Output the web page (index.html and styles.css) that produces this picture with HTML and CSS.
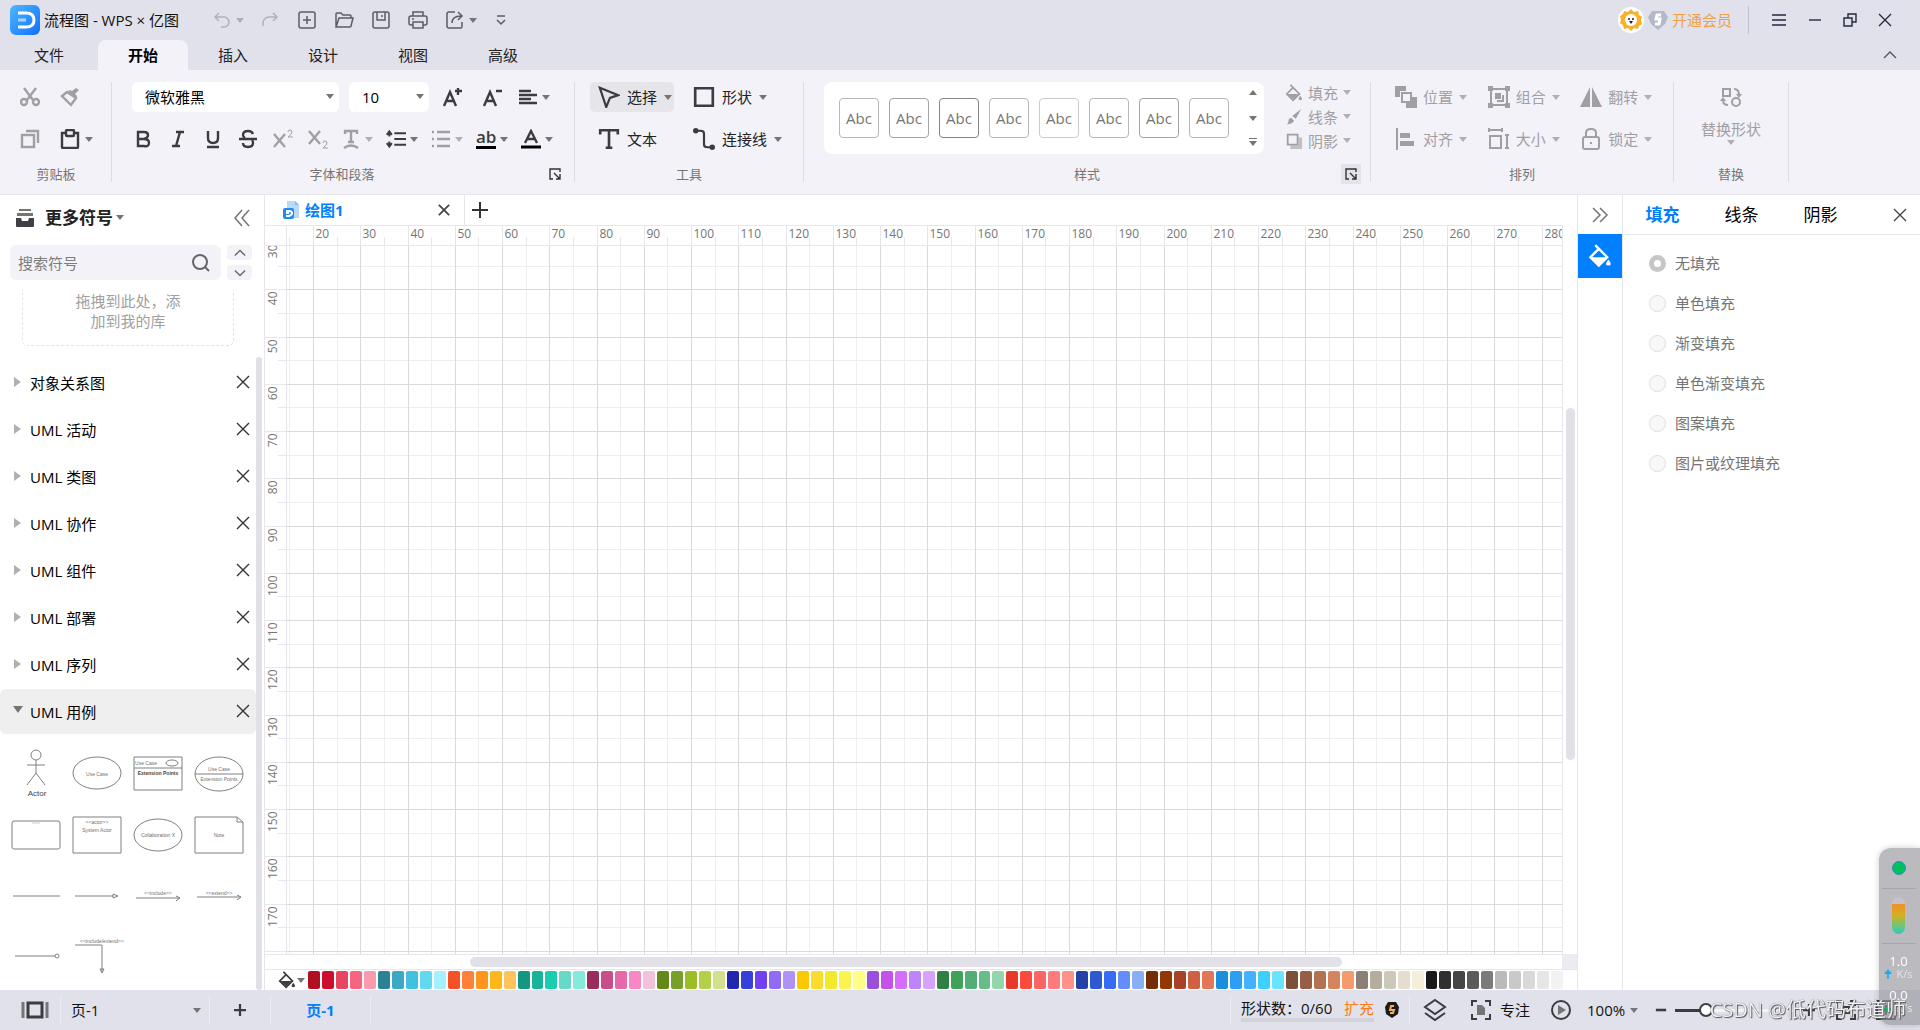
FILE: index.html
```html
<!DOCTYPE html>
<html lang="zh-CN">
<head>
<meta charset="utf-8">
<title>流程图 - WPS × 亿图</title>
<link rel="stylesheet" href="styles.css">
</head>
<body>
<svg class="sprite" aria-hidden="true">
  <symbol id="undo" viewBox="0 0 20 20"><path d="M7 3 3 7l4 4M3 7h9a5 5 0 0 1 0 10H9"/></symbol>
  <symbol id="redo" viewBox="0 0 20 20"><path d="m13 3 4 4-4 4M17 7H9a6 6 0 0 0-6 6v3"/></symbol>
  <symbol id="new" viewBox="0 0 20 20"><rect x="2" y="2" width="16" height="16" rx="2"/><path d="M10 6v8M6 10h8"/></symbol>
  <symbol id="open" viewBox="0 0 20 20"><path d="M2 16V4q0-1 1-1h4l2 2h7q1 0 1 1v2M2 17 5 8h14l-2 8q0 1-1 1z"/></symbol>
  <symbol id="save" viewBox="0 0 20 20"><rect x="2" y="2" width="16" height="16" rx="2"/><path d="M6 2v8h8V2M11 5v2"/></symbol>
  <symbol id="print" viewBox="0 0 20 20"><path d="M5 6V2h10v4M5 15H3q-2 0-2-2V8q0-2 2-2h14q2 0 2 2v5q0 2-2 2h-2M5 12h10v6H5zM4 9h2"/></symbol>
  <symbol id="export" viewBox="0 0 20 20"><path d="M10 2H4Q2 2 2 4v12q0 2 2 2h12q1 0 1-2v-4M7 13q0-7 9-7M13 2l4 4-4 4"/></symbol>
  <symbol id="more" viewBox="0 0 20 20"><path d="M6 6h8M6 10l4 4 4-4"/></symbol>
  <symbol id="cut" viewBox="0 0 20 20"><path d="m4 1 9 12M16 1 7 13"/><circle cx="4" cy="15" r="3"/><circle cx="16" cy="15" r="3"/></symbol>
  <symbol id="brush" viewBox="0 0 20 20"><path d="M7 5 2 9l9 9 5-7z"/><path d="m8 4 8 8 1-3-2-2 4-4-3-2-4 3-2-1z" class="solid"/></symbol>
  <symbol id="copy" viewBox="0 0 20 20"><rect x="2" y="6" width="12" height="12"/><path d="M6 2h12v12"/></symbol>
  <symbol id="paste" viewBox="0 0 20 20"><path d="M6 4H2v14q0 1 1 1h14q1 0 1-1V4h-4"/><rect x="6" y="1" width="8" height="6" rx="1"/></symbol>
  <symbol id="grow" viewBox="0 0 20 20"><path d="M2 19 8 5l6 14M4 14h8M13 4h7M16 1v7"/></symbol>
  <symbol id="shrink" viewBox="0 0 20 20"><path d="M2 19 8 5l6 14M4 14h8M14 4h6"/></symbol>
  <symbol id="align" viewBox="0 0 20 20"><path d="M1 4h12M1 8h18M1 12h12M1 16h18"/></symbol>
  <symbol id="bold" viewBox="0 0 20 20"><path d="M5 3h6q4 0 4 3t-4 4H5zM5 10h6q5 0 5 4t-5 3H5z"/></symbol>
  <symbol id="italic" viewBox="0 0 20 20"><path d="M8 3h8M4 17h8M12 3 8 17"/></symbol>
  <symbol id="underline" viewBox="0 0 20 20"><path d="M5 2v7q0 5 5 5t5-5V2M4 18h12"/></symbol>
  <symbol id="strike" viewBox="0 0 20 20"><path d="M15 5q-1-3-5-3-5 0-5 4 0 2 2 3M1 10h18M5 14q0 4 5 4t5-4q0-2-1-3"/></symbol>
  <symbol id="sup" viewBox="0 0 20 20"><path d="m1 5 11 13M12 5 1 18"/><path class="thin" d="M15 3q0-2 2-2t2 2q0 2-4 5h5"/></symbol>
  <symbol id="sub" viewBox="0 0 20 20"><path d="m1 2 11 13M12 2 1 15"/><path class="thin" d="M15 14q0-2 2-2t2 2q0 2-4 5h5"/></symbol>
  <symbol id="texteffect" viewBox="0 0 20 20"><path d="M4 5V2h12v3M10 2v11M7 13h6M3 19q7-5 14 0"/></symbol>
  <symbol id="spacing" viewBox="0 0 24 20"><path d="M10 3h14M10 10h14M10 17h14M4 2v5M4 13v5M1 5l3-4 3 4M1 15l3 4 3-4"/></symbol>
  <symbol id="bullets" viewBox="0 0 20 20"><path d="M6 3h13M6 10h13M6 17h13M1 3h2M1 10h2M1 17h2"/></symbol>
  <symbol id="fontcolor" viewBox="0 0 20 20"><path d="m4 14 6-12 6 12M6 10h8"/><path class="ink" d="M0 18h20"/></symbol>
  <symbol id="launcher" viewBox="0 0 12 12"><path d="M4 11H1V1h10v3M5 5l6 6M11 6v5H7"/></symbol>
  <symbol id="select" viewBox="0 0 24 24"><path d="m2 2 20 8-9 3-4 10z"/></symbol>
  <symbol id="shape" viewBox="0 0 20 20"><path d="M2 2h16v16H2z"/></symbol>
  <symbol id="text" viewBox="0 0 20 20"><path d="M2 6V2h16v4M10 2v16M7 18h6"/></symbol>
  <symbol id="connector" viewBox="0 0 24 24"><path d="M3 3h5q4 0 4 3v12q0 3 4 3h5"/><circle class="solid" cx="3" cy="3" r="3"/><circle class="solid" cx="21" cy="21" r="3"/></symbol>
  <symbol id="bucket" viewBox="0 0 20 20"><path d="m6 1 10 10-7 7-7-7 7-7"/><path class="solid" d="M3 11h12l-6 6z"/><path class="solid" d="M17 13q4 5 0 5t0-5z"/></symbol>
  <symbol id="pen" viewBox="0 0 20 20"><path class="solid" d="m18 1-6 11-4-3zM7 11l3 3q-1 4-8 4 2-1 2-4 0-3 3-3z"/></symbol>
  <symbol id="shadow" viewBox="0 0 20 20"><path d="M3 3h11v11H3z"/><path d="M6 17h11V6" class="fat"/></symbol>
  <symbol id="position" viewBox="0 0 22 22"><path d="M7 7h9v9H7z"/><path class="solid" d="M0 0h11v5H5v6H0zM11 17h6v-6h5v11H11z"/></symbol>
  <symbol id="group" viewBox="0 0 22 22"><path d="M3 3h16v16H3z"/><path class="solid" d="M0 0h5v5H0zM17 0h5v5h-5zM0 17h5v5H0zM17 17h5v5h-5zM7 7h6v6H7z"/><path d="M15 9v6H9"/></symbol>
  <symbol id="flip" viewBox="0 0 22 22"><path class="solid" d="M10 1v20H0zM12 1v20h10z"/></symbol>
  <symbol id="alignobj" viewBox="0 0 22 22"><path d="M2 0v22"/><path class="solid" d="M5 5h10v5H5zM5 13h14v5H5z"/></symbol>
  <symbol id="size" viewBox="0 0 22 22"><path d="M2 8h11v12H2zM1 2h13M1 0v4M14 0v4M19 8v12M17 7h4M17 20h4"/></symbol>
  <symbol id="lock" viewBox="0 0 22 22"><rect x="3" y="9" width="16" height="12" rx="2"/><path d="M6 9V5q0-4 5-4t5 4v4M11 14v2"/></symbol>
  <symbol id="replace" viewBox="0 0 22 22"><path d="M3 3h7v7H3z"/><circle cx="16" cy="16" r="4"/><path d="M14 3q5 0 5 6M8 19q-5 0-5-5"/><path class="solid" d="m16 8 3 4 3-4zM0 15l3-4 3 4z"/></symbol>
  <symbol id="close" viewBox="0 0 14 14"><path d="m1 1 12 12M13 1 1 13"/></symbol>
  <symbol id="menu" viewBox="0 0 16 16"><path d="M1 3h14M1 8h14M1 13h14"/></symbol>
  <symbol id="min" viewBox="0 0 14 14"><path d="M1 7h12"/></symbol>
  <symbol id="restore" viewBox="0 0 14 14"><path d="M1 5h8v8H1zM5 5V1h8v8H9"/></symbol>
  <symbol id="up" viewBox="0 0 14 14"><path d="m1 10 6-6 6 6"/></symbol>
  <symbol id="down" viewBox="0 0 14 14"><path d="m1 4 6 6 6-6"/></symbol>
  <symbol id="chevrons" viewBox="0 0 18 18"><path d="M9 1 2 9l7 8M16 1 9 9l7 8"/></symbol>
  <symbol id="chevrons-right" viewBox="0 0 18 18"><path d="m2 2 7 7-7 7M9 2l7 7-7 7"/></symbol>
  <symbol id="tray" viewBox="0 0 18 18"><path class="soft" d="M3 0h12v2H3zM1 4h16v3H1z"/><path class="solid" d="M0 9h5l1 3h6l1-3h5v8q0 1-1 1H1q-1 0-1-1z"/></symbol>
  <symbol id="search" viewBox="0 0 20 20"><circle cx="9" cy="9" r="7"/><path d="m14 14 4 4"/></symbol>
  <symbol id="plus" viewBox="0 0 16 16"><path d="M8 0v16M0 8h16"/></symbol>
  <symbol id="pages" viewBox="0 0 28 20"><path d="M7 3h14v14H7z"/><path class="grey" d="M2 2v16M26 2v16"/></symbol>
  <symbol id="layers" viewBox="0 0 24 24"><path d="m12 2 10 7-10 7L2 9zM2 15l10 7 10-7"/></symbol>
  <symbol id="focus" viewBox="0 0 22 22"><path d="M2 7V2h5M15 2h5v5M20 15v5h-5M7 20H2v-5"/><path class="soft" d="M7 6h5l3 3v7H7z"/></symbol>
  <symbol id="play" viewBox="0 0 22 22"><circle cx="11" cy="11" r="9"/><path class="soft" d="m8 6 8 5-8 5z"/></symbol>
  <symbol id="fit" viewBox="0 0 22 22"><path d="M2 7V2h5M15 2h5v5M20 15v5h-5M7 20H2v-5M8 8h6v6H8z"/></symbol>
  <symbol id="full" viewBox="0 0 22 22"><path d="M2 2h18v18H2zM11 6v10M7 11h8"/></symbol>
  <symbol id="arrowup" viewBox="0 0 10 12"><path class="solid" d="M5 0 0 6h4v6h2V6h4z"/></symbol>
</svg>

<div class="app">
  <header class="titlebar">
    <svg class="logo" viewBox="0 0 30 30"><defs><linearGradient id="lg" x1="0" y1="0" x2="1" y2="1"><stop offset="0" stop-color="#4db8ff"/><stop offset="1" stop-color="#1070ff"/></linearGradient></defs><rect width="30" height="30" rx="6" fill="url(#lg)"/><path d="M8 8h8q8 0 8 7t-8 7H8" fill="none" stroke="#fff" stroke-width="3"/><path d="M8 15h8" stroke="#a9d8ff" stroke-width="3"/></svg>
    <h1 class="title">流程图 - WPS × 亿图</h1>
    <div class="quick">
      <button class="q off" aria-label="撤销"><svg class="i"><use href="#undo"/></svg><span class="caret"></span></button>
      <button class="q off" aria-label="重做"><svg class="i"><use href="#redo"/></svg></button>
      <button class="q" aria-label="新建"><svg class="i"><use href="#new"/></svg></button>
      <button class="q" aria-label="打开"><svg class="i"><use href="#open"/></svg></button>
      <button class="q" aria-label="保存"><svg class="i"><use href="#save"/></svg></button>
      <button class="q" aria-label="打印"><svg class="i"><use href="#print"/></svg></button>
      <button class="q" aria-label="导出"><svg class="i"><use href="#export"/></svg><span class="caret"></span></button>
      <button class="q" aria-label="自定义"><svg class="i"><use href="#more"/></svg></button>
    </div>
    <div class="account">
      <svg class="avatar" viewBox="0 0 26 26"><circle cx="13" cy="13" r="13" fill="#fff"/><path d="m13 2 3 3 4-1 1 4 3 2-1 3 1 4-3 2-1 3-4-1-3 3-3-3-4 1-1-4-3-2 1-3-1-4 3-2 1-3 4 1z" fill="#f7b12c"/><circle cx="13" cy="13" r="6" fill="#fff"/><circle cx="11" cy="12" r="1" fill="#222"/><circle cx="15" cy="12" r="1" fill="#222"/><path d="M11 14h4l-2 3z" fill="#222"/></svg>
      <svg class="vip" viewBox="0 0 20 20"><path d="M4 1h12l4 6-3 7-7 6-7-6-3-7z" fill="#b3b8ca"/><path d="M13 5H9L8 9h4l-1 5H7" fill="none" stroke="#fff" stroke-width="3"/></svg>
      <a class="upgrade" href="#">开通会员</a>
    </div>
    <div class="window">
      <button aria-label="菜单"><svg class="i16"><use href="#menu"/></svg></button>
      <button aria-label="最小化"><svg class="i14"><use href="#min"/></svg></button>
      <button aria-label="还原"><svg class="i14"><use href="#restore"/></svg></button>
      <button aria-label="关闭"><svg class="i14"><use href="#close"/></svg></button>
    </div>
  </header>

  <nav class="tabs">
    <button class="tab file">文件</button><button class="tab active">开始</button><button class="tab">插入</button><button class="tab">设计</button><button class="tab">视图</button><button class="tab">高级</button>
    <button class="collapse" aria-label="收起功能区"><svg class="i14"><use href="#up"/></svg></button>
  </nav>

  <section class="ribbon">
    <div class="group clip">
      <div class="rows">
        <div class="row"><button class="tool w40 off" aria-label="剪切"><svg class="i"><use href="#cut"/></svg></button><button class="tool w40 off" aria-label="格式刷"><svg class="i"><use href="#brush"/></svg></button></div>
        <div class="row"><button class="tool w40 off" aria-label="复制"><svg class="i"><use href="#copy"/></svg></button><button class="tool w40" aria-label="粘贴"><svg class="i"><use href="#paste"/></svg><span class="caret"></span></button></div>
      </div>
      <div class="name">剪贴板</div>
    </div>
    <div class="group fonts">
      <div class="rows">
        <div class="row first">
          <label class="combo family"><select aria-label="字体"><option>微软雅黑</option></select></label>
          <label class="combo fsize"><select aria-label="字号"><option>10</option></select></label>
          <button class="tool w40" aria-label="增大字号"><svg class="i"><use href="#grow"/></svg></button><button class="tool w40" aria-label="减小字号"><svg class="i"><use href="#shrink"/></svg></button><button class="tool w45" aria-label="对齐"><svg class="i"><use href="#align"/></svg><span class="caret"></span></button>
        </div>
        <div class="row">
          <button class="tool w35" aria-label="加粗"><svg class="i"><use href="#bold"/></svg></button><button class="tool w35" aria-label="斜体"><svg class="i"><use href="#italic"/></svg></button><button class="tool w35" aria-label="下划线"><svg class="i"><use href="#underline"/></svg></button><button class="tool w35" aria-label="删除线"><svg class="i"><use href="#strike"/></svg></button><button class="tool w35 off" aria-label="上标"><svg class="i"><use href="#sup"/></svg></button><button class="tool w35 off" aria-label="下标"><svg class="i"><use href="#sub"/></svg></button><button class="tool w45 off" aria-label="文字效果"><svg class="i"><use href="#texteffect"/></svg><span class="caret"></span></button><button class="tool w45" aria-label="行距"><svg class="i"><use href="#spacing"/></svg><span class="caret"></span></button><button class="tool w45 off" aria-label="项目符号"><svg class="i"><use href="#bullets"/></svg><span class="caret"></span></button><button class="tool w45" aria-label="突出显示"><span class="ab">ab</span><span class="caret"></span></button><button class="tool w45" aria-label="字体颜色"><svg class="i"><use href="#fontcolor"/></svg><span class="caret"></span></button>
        </div>
      </div>
      <div class="name"><span>字体和段落</span><button class="launch" aria-label="字体设置"><svg class="i12"><use href="#launcher"/></svg></button></div>
    </div>
    <div class="group tools">
      <div class="rows">
        <div class="row"><button class="labelled sel on"><svg class="i22"><use href="#select"/></svg>选择<span class="caret"></span></button><button class="labelled"><svg class="i22"><use href="#shape"/></svg>形状<span class="caret"></span></button></div>
        <div class="row"><button class="labelled sel"><svg class="i22"><use href="#text"/></svg>文本</button><button class="labelled"><svg class="i22"><use href="#connector"/></svg>连接线<span class="caret"></span></button></div>
      </div>
      <div class="name">工具</div>
    </div>
    <div class="group styles">
      <div class="rows side">
        <div class="gallery">
          <button class="abc">Abc</button><button class="abc b">Abc</button><button class="abc c">Abc</button><button class="abc">Abc</button><button class="abc d">Abc</button><button class="abc">Abc</button><button class="abc b">Abc</button><button class="abc">Abc</button>
          <div class="scroller"><button aria-label="上一行"><span class="caret upc"></span></button><button aria-label="下一行"><span class="caret"></span></button><button aria-label="展开"><span class="caret bar"></span></button></div>
        </div>
        <div class="stack off"><button><svg class="i18"><use href="#bucket"/></svg>填充<span class="caret"></span></button><button><svg class="i18"><use href="#pen"/></svg>线条<span class="caret"></span></button><button><svg class="i18"><use href="#shadow"/></svg>阴影<span class="caret"></span></button></div>
      </div>
      <div class="name"><span>样式</span><button class="launch tint" aria-label="样式设置"><svg class="i12"><use href="#launcher"/></svg></button></div>
    </div>
    <div class="group arrange off">
      <div class="rows">
        <div class="row"><button class="arr"><svg class="i22"><use href="#position"/></svg>位置<span class="caret"></span></button><button class="arr"><svg class="i22"><use href="#group"/></svg>组合<span class="caret"></span></button><button class="arr"><svg class="i22"><use href="#flip"/></svg>翻转<span class="caret"></span></button></div>
        <div class="row"><button class="arr"><svg class="i22"><use href="#alignobj"/></svg>对齐<span class="caret"></span></button><button class="arr"><svg class="i22"><use href="#size"/></svg>大小<span class="caret"></span></button><button class="arr"><svg class="i22"><use href="#lock"/></svg>锁定<span class="caret"></span></button></div>
      </div>
      <div class="name">排列</div>
    </div>
    <div class="group swap off">
      <button class="big"><svg class="i22"><use href="#replace"/></svg><span>替换形状</span><span class="caret"></span></button>
      <div class="name">替换</div>
    </div>
  </section>

  <main class="body">
    <aside class="library">
      <div class="libhead"><svg class="i18 tray"><use href="#tray"/></svg><button class="libtitle">更多符号<span class="caret"></span></button><button class="fold" aria-label="收起"><svg class="i18"><use href="#chevrons"/></svg></button></div>
      <div class="searchrow">
        <label class="search"><input type="text" placeholder="搜索符号" aria-label="搜索符号"><svg class="i"><use href="#search"/></svg></label>
        <div class="steps"><button aria-label="上一个"><svg class="i12"><use href="#up"/></svg></button><button aria-label="下一个"><svg class="i12"><use href="#down"/></svg></button></div>
      </div>
      <div class="libscroll">
        <div class="liblist">
          <div class="drop">拖拽到此处，添<br>加到我的库</div>
          <div class="cat"><span class="tri"></span><span>对象关系图</span><button aria-label="关闭"><svg class="i14"><use href="#close"/></svg></button></div>
          <div class="cat"><span class="tri"></span><span>UML 活动</span><button aria-label="关闭"><svg class="i14"><use href="#close"/></svg></button></div>
          <div class="cat"><span class="tri"></span><span>UML 类图</span><button aria-label="关闭"><svg class="i14"><use href="#close"/></svg></button></div>
          <div class="cat"><span class="tri"></span><span>UML 协作</span><button aria-label="关闭"><svg class="i14"><use href="#close"/></svg></button></div>
          <div class="cat"><span class="tri"></span><span>UML 组件</span><button aria-label="关闭"><svg class="i14"><use href="#close"/></svg></button></div>
          <div class="cat"><span class="tri"></span><span>UML 部署</span><button aria-label="关闭"><svg class="i14"><use href="#close"/></svg></button></div>
          <div class="cat"><span class="tri"></span><span>UML 序列</span><button aria-label="关闭"><svg class="i14"><use href="#close"/></svg></button></div>
          <div class="cat open"><span class="tri"></span><span>UML 用例</span><button aria-label="关闭"><svg class="i14"><use href="#close"/></svg></button></div>
          <div class="shapes">
            <svg viewBox="0 0 61 61"><circle cx="30" cy="13" r="5"/><path d="M30 18v13M21 23h18M21 43l9-12 9 12"/><text class="actor" x="31" y="54">Actor</text></svg>
            <svg viewBox="0 0 61 61"><ellipse cx="30" cy="31" rx="24" ry="16"/><text x="30" y="34">Use Case</text></svg>
            <svg viewBox="0 0 61 61"><path d="M6 15h48v33H6zM6 26h48"/><ellipse cx="44" cy="21" rx="6" ry="3"/><text x="18" y="23">Use Case</text><text class="strong" x="30" y="33">Extension Points</text></svg>
            <svg viewBox="0 0 61 61"><ellipse cx="30" cy="32" rx="24" ry="17"/><path d="M6 32h48"/><text x="30" y="29">Use Case</text><text x="30" y="39">Extension Points</text></svg>
            <svg viewBox="0 0 61 61"><rect x="6" y="18" width="48" height="28" rx="2"/><path class="pale" d="M26 20h8"/></svg>
            <svg viewBox="0 0 61 61"><path d="M6 14h48v36H6z"/><text x="30" y="21">&lt;&lt;actor&gt;&gt;</text><text x="30" y="29">System Actor</text></svg>
            <svg viewBox="0 0 61 61"><ellipse cx="30" cy="32" rx="24" ry="16"/><text x="30" y="34">Collaboration X</text></svg>
            <svg viewBox="0 0 61 61"><path d="M6 14h42l6 5v31H6zM48 14v5h6"/><text x="30" y="34">Note</text></svg>
            <svg viewBox="0 0 61 61"><path d="M7 32h47"/></svg>
            <svg viewBox="0 0 61 61"><path d="M8 32h38M46 30v4l5-2z"/></svg>
            <svg viewBox="0 0 61 61"><path d="M8 34h44M48 32l4 2-4 3"/><text x="30" y="31">&lt;&lt;include&gt;&gt;</text></svg>
            <svg viewBox="0 0 61 61"><path d="M8 33h44M48 31l4 2-4 3"/><text x="30" y="31">&lt;&lt;extend&gt;&gt;</text></svg>
            <svg viewBox="0 0 61 61"><path d="M9 31h40"/><circle cx="51" cy="31" r="2"/></svg>
            <svg viewBox="0 0 61 61"><path d="M8 20h27v27M33 44l2 4 2-4z"/><text x="35" y="18">&lt;&lt;include/extend&gt;&gt;</text></svg>
          </div>
        </div>
        <div class="vbar"></div>
      </div>
    </aside>

    <section class="workspace">
      <div class="doctabs">
        <div class="doctab"><svg class="docicon" viewBox="0 0 16 18"><path d="M4 0h8l4 4v13H4z" fill="#b9d9fb"/><path d="M12 0v4h4z" fill="#7db9f5"/><rect y="7" width="11" height="11" rx="2" fill="#2289fa"/><path d="M3 10h3q3 0 3 2t-3 3H3M3 12h3" fill="none" stroke="#fff"/></svg><span>绘图1</span><button aria-label="关闭"><svg class="i12"><use href="#close"/></svg></button></div>
        <button class="adddoc" aria-label="新建绘图"><svg class="i16"><use href="#plus"/></svg></button>
      </div>
      <div class="stage">
        <svg class="drawing" id="drawing"></svg>
        <div class="stagebar"><div class="thumb"></div></div>
        <div class="hbar"><div class="thumb"></div></div>
        <div class="corner"></div>
      </div>
      <div class="palette"><button class="pick" aria-label="填充颜色"><svg class="i18"><use href="#bucket"/></svg><span class="caret"></span></button><div class="swatches" id="swatches"></div></div>
    </section>

    <div class="rail"><button class="expand" aria-label="展开"><svg class="i18"><use href="#chevrons-right"/></svg></button><button class="railtile" aria-label="填充"><svg class="i24"><use href="#bucket"/></svg></button></div>

    <aside class="props">
      <div class="proptabs"><button class="on">填充</button><button>线条</button><button>阴影</button><button class="x" aria-label="关闭"><svg class="i14"><use href="#close"/></svg></button></div>
      <form class="options">
        <label><input type="radio" name="fill" checked>无填充</label>
        <label><input type="radio" name="fill">单色填充</label>
        <label><input type="radio" name="fill">渐变填充</label>
        <label><input type="radio" name="fill">单色渐变填充</label>
        <label><input type="radio" name="fill">图案填充</label>
        <label><input type="radio" name="fill">图片或纹理填充</label>
      </form>
    </aside>
  </main>

  <footer class="status">
    <button class="pagesbtn" aria-label="页面"><svg class="i28"><use href="#pages"/></svg></button>
    <label class="pagesel"><select aria-label="当前页"><option>页-1</option></select></label>
    <button class="addpage" aria-label="添加页"><svg class="i12"><use href="#plus"/></svg></button>
    <button class="pagetab">页-1</button>
    <div class="statusright">
      <div class="count"><div class="countline"><span>形状数：0/60</span><a href="#">扩充</a></div><div class="meter"></div></div>
      <svg class="badge" viewBox="0 0 14 18"><path d="M3 1h8l3 5-1 7-6 4-6-4-1-7z" fill="#1d1a18"/><path d="M9 5H6L5 9h4l-1 3H5" fill="none" stroke="#f0b060" stroke-width="2"/></svg>
      <button class="layers" aria-label="图层"><svg class="i24"><use href="#layers"/></svg></button>
      <button class="focus"><svg class="i22"><use href="#focus"/></svg>专注</button>
      <button class="playbtn" aria-label="播放"><svg class="i22"><use href="#play"/></svg></button>
      <button class="zoom">100%<span class="caret"></span></button>
      <button class="minus" aria-label="缩小"><svg class="i12"><use href="#min"/></svg></button>
      <input class="slider" type="range" min="0" max="100" value="23" aria-label="缩放">
      <button class="plusbtn" aria-label="放大"><svg class="i12"><use href="#plus"/></svg></button>
      <button class="fitbtn" aria-label="适应"><svg class="i22"><use href="#fit"/></svg></button>
      <button class="fullbtn" aria-label="全屏"><svg class="i22"><use href="#full"/></svg></button>
    </div>
  </footer>
</div>

<div class="monitor">
  <span class="dot"></span>
  <div class="gaugebox"><span class="gauge"></span></div>
  <div class="rate"><b>1.0</b><span><svg viewBox="0 0 10 12"><use href="#arrowup"/></svg>K/s</span></div>
  <div class="rate"><b>0.0</b><span class="dn"><svg viewBox="0 0 10 12"><use href="#arrowup"/></svg>K/s</span></div>
</div>
<div class="watermark">CSDN @低代码布道师</div>
<script src="canvas.js"></script>
</body>
</html>
```
FILE: styles.css
```css
* { box-sizing: border-box; }
body { margin: 0; overflow: hidden; font: 15px/20px "Open Sans", "Noto Sans CJK SC", sans-serif; color: #111; background: #fff; }
button { border: 0; padding: 0; margin: 0; background: none; font: inherit; color: inherit; display: flex; align-items: center; white-space: nowrap; }
select, input { font: inherit; color: inherit; margin: 0; }
a { text-decoration: none; }
svg { flex: none; fill: none; stroke: currentColor; stroke-width: 2px; }
symbol { overflow: visible; }
.sprite { position: absolute; width: 0; height: 0; }
.solid { fill: currentColor; stroke: none; }
.soft { fill: #757575; stroke: none; }
.grey { stroke: #757575; stroke-width: 3px; }
.thin { stroke-width: 1px; }
.fat { stroke-width: 4px; opacity: .6; }
.ink { stroke: #000; stroke-width: 3px; }
.i { width: 20px; height: 20px; }
.i12 { width: 12px; height: 12px; }
.i14 { width: 14px; height: 14px; stroke-width: 1.4px; }
.i16 { width: 16px; height: 16px; }
.i18 { width: 18px; height: 18px; }
.i22 { width: 22px; height: 22px; }
.i24 { width: 24px; height: 24px; }
.i28 { width: 28px; height: 20px; stroke-width: 3px; }
.caret { flex: none; width: 0; height: 0; border: 4px solid transparent; border-top: 5px solid #757575; border-bottom: 0; }

.app { display: flex; flex-direction: column; height: 100vh; }

.titlebar { flex: none; display: flex; align-items: center; height: 40px; padding-left: 10px; background: #e1e1eb; }
.logo { width: 30px; height: 30px; stroke: none; }
.title { margin: 0 0 0 4px; width: 168px; font-size: 15px; line-height: 20px; font-weight: 400; white-space: nowrap; }
.quick { display: flex; color: #5c5c66; }
.quick svg { stroke-width: 1.5px; }
.q { width: 37px; gap: 4px; }
.q:first-child { width: 48px; }
.q:nth-child(7) { width: 46px; }
.q.off, .off .caret { color: #b0b0b8; }
.q.off .caret, .off .caret { border-top-color: #b0b0b4; }
.account { display: flex; align-items: center; margin-left: auto; gap: 4px; height: 28px; padding-right: 16px; border-right: 1px solid #c0c2d0; }
.avatar { width: 26px; height: 26px; stroke: none; }
.vip { width: 20px; height: 20px; stroke: none; }
.upgrade { color: #eda24a; }
.window { display: flex; gap: 21px; padding: 0 28px 0 22px; color: #222a40; }
.window svg { stroke-width: 1.4px; }

.tabs { flex: none; display: flex; height: 30px; background: #e1e1eb; }
.tab { width: 90px; justify-content: center; color: #222; }
.tab.file { width: 98px; }
.tab.active { font-weight: 700; color: #000; background: #f3f2f8; border-radius: 8px 8px 0 0; }
.collapse { margin-left: auto; margin-right: 23px; color: #555; }

.ribbon { flex: none; display: flex; height: 125px; padding-top: 12px; background: #f3f2f8; border-bottom: 1px solid #e6e6ec; }
.group { display: flex; flex-direction: column; height: 100px; border-right: 1px solid #dcdce2; }
.group, .group.arrange button { color: #3c3c40; }
.group.off button, .group .off, .stack.off button { color: #a0a0a4; }
.rows { flex: none; display: flex; flex-direction: column; gap: 12px; height: 72px; }
.row { display: flex; height: 30px; }
.name { position: relative; flex: none; display: flex; align-items: center; justify-content: center; height: 20px; margin-top: 10px; font-size: 13px; color: #757575; }
.launch { position: absolute; right: 9px; width: 20px; height: 20px; justify-content: center; color: #333; }
.launch.tint { background: #e3e3e8; }
.launch svg { stroke-width: 1.4px; }
.tool { gap: 5px; }
.tool svg { stroke-width: 2.4px; }
.w35 { width: 35px; justify-content: center; }
.w40 { width: 40px; }
.w45 { width: 45px; }
.clip { width: 112px; padding-left: 20px; }
.clip .name { padding-right: 19px; }
.fonts { width: 463px; padding-left: 13px; }
.fonts .name { margin-left: -13px; }
.fonts .name > span { margin-right: 2px; }
.row.first { padding-left: 7px; gap: 0; }
.combo { position: relative; display: flex; margin-right: 10px; background: #fff; border-radius: 6px; }
.combo select { width: 100%; padding: 0 13px; border: 0; background: none; appearance: none; outline: 0; color: #000; }
.combo::after, .pagesel::after { content: ""; position: absolute; right: 5px; top: 12px; border: 4px solid transparent; border-top: 5px solid #757575; border-bottom: 0; }
.family { width: 207px; }
.fsize { width: 80px; margin-right: 3px; }
.fonts .w40 { justify-content: center; }
.row .w45 { padding-left: 6px; gap: 4px; }
.ab { width: 20px; height: 20px; font: 600 17px/16px "Open Sans", sans-serif; border-bottom: 3px solid #000; }
.tools { width: 229px; padding-left: 15px; }
.tools .name { margin-left: -15px; }
.labelled { height: 30px; padding: 0 6px 0 8px; gap: 7px; color: #222; border-radius: 5px; }
.labelled.sel { width: 84px; margin-right: 11px; padding-right: 2px; }
.labelled.on { background: #e5e5ea; }
.labelled svg { color: #3c3c40; stroke-width: 2.4px; }
.styles { width: 567px; padding: 0; }
.rows.side { flex-direction: row; gap: 21px; padding-left: 20px; }
.gallery { display: flex; align-items: center; width: 440px; height: 72px; gap: 10px; padding-left: 15px; background: #fff; border-radius: 8px; }
.abc { width: 40px; height: 40px; justify-content: center; border: 1px solid #b8b8bc; border-radius: 4px; color: #757575; }
.abc.b { border-color: #a4a4a8; }
.abc.c { border-color: #858588; }
.abc.d { border-color: #cccccf; }
.scroller { display: flex; flex-direction: column; justify-content: space-between; align-items: center; height: 56px; padding-left: 10px; }
.caret.upc { border-top: 0; border-bottom: 5px solid #757575; }
.caret.bar { position: relative; }
.caret.bar::before { content: ""; position: absolute; left: -4px; top: -8px; width: 8px; height: 1px; background: #757575; }
.stack { display: flex; flex-direction: column; gap: 3px; }
.stack button { gap: 5px; height: 21px; }
.arrange { width: 303px; padding-left: 24px; }
.arr { width: 94px; gap: 6px; }
.arrange .name { margin-left: -24px; }
.swap { width: 115px; align-items: center; }
.big { flex: none; flex-direction: column; height: 72px; padding-top: 4px; gap: 11px; }
.big .caret { margin-top: -10px; }

.body { flex: 1; min-height: 0; display: flex; }
.library { flex: none; width: 265px; display: flex; flex-direction: column; border-right: 1px solid #e6e6ec; }
.libhead { display: flex; align-items: center; height: 45px; padding: 0 13px 0 16px; }
.tray { color: #404044; }
.libtitle { margin-left: 11px; gap: 3px; font-size: 17px; font-weight: 700; color: #222; }
.fold { margin-left: auto; color: #757575; }
.fold svg, .expand svg { stroke-width: 1.5px; }
.searchrow { display: flex; gap: 6px; padding: 5px 0 10px 10px; }
.search { display: flex; align-items: center; width: 211px; height: 35px; padding: 0 10px 0 8px; background: #f3f2f8; border-radius: 6px; color: #666; }
.search input { flex: 1; min-width: 0; padding: 0; border: 0; background: none; outline: 0; }
.search input::placeholder { color: #7d7d80; opacity: 1; }
.steps { display: flex; flex-direction: column; gap: 5px; }
.steps button { width: 25px; height: 15px; justify-content: center; background: #f3f2f8; border-radius: 4px; color: #666; }
.steps svg { stroke-width: 1.5px; }
.libscroll { flex: 1; min-height: 0; display: flex; overflow: hidden; }
.liblist { width: 256px; }
.drop { height: 56px; margin: 0 22px 14px; padding-top: 1px; border: 1px dashed #e4e4e8; border-top: 0; border-radius: 0 0 6px 6px; text-align: center; color: #a0a0a0; }
.cat { display: flex; align-items: center; height: 45px; margin-bottom: 2px; padding: 0 6px 0 14px; color: #000; }
.cat button { margin-left: auto; padding-bottom: 2px; color: #333; }
.tri { width: 16px; height: 12px; }
.tri::before { content: ""; display: block; width: 0; height: 0; border: 5px solid transparent; border-left: 7px solid #b0b0b0; border-right: 0; }
.cat.open { background: #efeff0; border-radius: 6px; margin-bottom: 8px; }
.cat.open .tri::before { border: 5px solid transparent; border-top: 7px solid #757575; border-bottom: 0; margin-left: -1px; }
.shapes { display: grid; grid-template-columns: repeat(4, 61px); padding-left: 6px; }
.shapes svg { width: 61px; height: 61px; stroke: #808080; stroke-width: 1px; }
.shapes text { font: 5px "Liberation Sans", sans-serif; fill: #707070; stroke: none; text-anchor: middle; }
.shapes .actor { font-size: 8px; fill: #444; }
.shapes .strong { font-weight: 700; fill: #444; }
.shapes .pale { stroke: #ccc; }
.vbar { width: 6px; margin-top: 67px; background: #e0e0e6; border-radius: 3px; }

.workspace { flex: 1; min-width: 0; display: flex; flex-direction: column; border-right: 1px solid #e6e6ec; }
.doctabs { flex: none; display: flex; height: 30px; }
.doctab { display: flex; align-items: center; width: 200px; padding: 0 14px 0 18px; border-right: 1px solid #e6e6ec; color: #0080ff; font-weight: 700; }
.docicon { width: 16px; height: 18px; margin-right: 6px; stroke: none; }
.doctab button { margin-left: auto; color: #444; }
.doctab button svg { stroke-width: 2px; }
.adddoc { padding-left: 7px; color: #333; }
.stage { flex: 1; min-height: 0; display: grid; grid-template: 1fr 15px / 1fr 15px; }
.drawing { width: 100%; height: 100%; min-width: 0; min-height: 0; overflow: hidden; stroke-width: 1px; }
.drawing .frame { stroke: #e6e6ec; }
.drawing .major { stroke: #dadada; }
.drawing .minor { stroke: #eeeeee; }
.drawing text { font: 12px "Open Sans", sans-serif; fill: #757575; stroke: none; }
.stagebar { padding: 183px 2px 0 3px; border-left: 1px solid #e6e6ec; }
.stagebar .thumb { height: 352px; background: #e2e1e7; border-radius: 5px; }
.hbar { padding: 2px 220px 3px 205px; border-top: 1px solid #e6e6ec; }
.hbar .thumb { height: 10px; background: #e2e1e7; border-radius: 5px; }
.corner { background: #ecebf2; }
.palette { flex: none; display: flex; height: 21px; padding: 1px 0 1px 13px; border-top: 1px solid #e6e6ec; }
.pick { width: 30px; gap: 1px; color: #3c3c40; }
.swatches { flex: 1; display: flex; gap: 2px; }
.swatches span { flex: 1; height: 18px; border-radius: 2px; }

.rail { flex: none; width: 45px; border-right: 1px solid #e6e6ec; }
.expand { width: 44px; height: 39px; justify-content: center; color: #757575; }
.railtile { width: 44px; height: 44px; justify-content: center; background: #0080ff; color: #fff; }
.props { flex: none; width: 297px; }
.proptabs { display: flex; height: 40px; border-bottom: 1px solid #e6e6ec; font-size: 17px; color: #000; }
.proptabs button { width: 79px; justify-content: center; }
.proptabs .on { color: #0080ff; font-weight: 700; }
.proptabs .x { width: 14px; margin: 0 13px 0 auto; color: #444; }
.options { display: flex; flex-direction: column; gap: 20px; padding: 18px 0 0 26px; color: #757575; }
.options label { display: flex; align-items: center; gap: 9px; height: 20px; }
.options input { appearance: none; width: 17px; height: 17px; border: 1px solid #dedede; border-radius: 50%; background: #f8f8f8; }
.options input:checked { border: 5px solid #c6c6c6; background: #fff; }

.status { flex: none; display: flex; align-items: center; height: 40px; background: #e1e1eb; color: #111; }
.status > button, .pagesel { height: 28px; border-right: 1px solid #ececf2; }
.pagesbtn { width: 61px; padding-left: 21px; }
.pagesbtn, .addpage { color: #3c3c40; }
.addpage svg, .plusbtn svg { stroke-width: 3px; }
.pagesel { position: relative; display: flex; width: 149px; }
.pagesel select { width: 100%; padding: 0 10px; border: 0; background: none; appearance: none; }
.pagesel::after { right: 8px; }
.addpage, .pagetab { justify-content: center; width: 61px; }
.pagetab { width: 100px; color: #0080ff; font-weight: 700; }
.statusright { display: flex; align-items: center; height: 28px; margin-left: auto; padding-right: 23px; border-left: 1px solid #ececf2; }
.statusright svg { color: #3c3c40; }
.count { width: 133px; margin: 0 11px 0 10px; }
.countline { display: flex; justify-content: space-between; height: 19px; line-height: 18px; white-space: nowrap; }
.count a { color: #ff7b12; }
.meter { height: 4px; background: #d2d2da; }
.badge { width: 14px; height: 18px; stroke: none; }
.layers { height: 28px; margin-left: 10px; padding: 0 23px 0 13px; border-left: 1px solid #ececf2; }
.focus { gap: 8px; margin-right: 20px; }
.playbtn { margin-right: 15px; }
.zoom { width: 68px; gap: 5px; }
.minus { margin-right: 8px; }
.minus svg { stroke-width: 3px; }
.slider { width: 120px; height: 14px; margin-right: 8px; appearance: none; background: linear-gradient(90deg, #3c3c40 25%, #f4f4f8 25%) center / 100% 3px no-repeat; }
.slider::-webkit-slider-thumb { appearance: none; width: 14px; height: 14px; border: 2px solid #3c3c40; border-radius: 50%; background: #fff; }
.plusbtn { margin-right: 20px; }
.fitbtn { margin-right: 18px; }

.monitor { position: fixed; right: 0; bottom: 5px; width: 41px; height: 177px; padding: 13px 5px 0 3px; display: flex; flex-direction: column; align-items: center; background: rgba(150, 151, 158, .66); border-radius: 12px 0 0 12px; box-shadow: 0 0 6px rgba(0, 0, 0, .2); color: #fff; font-size: 13px; line-height: 14px; }
.dot { width: 14px; height: 14px; border-radius: 50%; background: #00bf63; border: 1px solid #3688b8; }
.gaugebox { width: 34px; height: 56px; margin: 13px 0 10px; padding-top: 8px; border: 1px solid #a6a6aa; border-width: 1px 0; }
.gauge { display: block; width: 13px; height: 37px; margin: 0 auto; border-radius: 7px; background: linear-gradient(#c4c4c8 20%, #f09030 20%, #d4b020 50%, #50cc90 85%, #3cc0c0); }
.rate { height: 34px; text-align: center; }
.rate b { display: block; font-weight: 400; }
.rate span { display: flex; align-items: center; gap: 4px; font-size: 11px; line-height: 12px; color: #e4e4e8; }
.rate svg { width: 8px; height: 10px; color: #10aaff; }
.rate .dn svg { color: #00c060; transform: rotate(180deg); }
.watermark { position: fixed; right: 14px; bottom: 6px; font-size: 20px; line-height: 28px; color: #f2f2f4; text-shadow: 1px 1px 1px #555, 0 0 1px #555; white-space: nowrap; }
```
FILE: canvas.js
```js
const NS = "http://www.w3.org/2000/svg";
const svg = document.getElementById("drawing");
const RULER_X = 21, RULER_Y = 21, STEP = 47.25;
const ORIGIN_X = 48, ORIGIN_Y = 17;

function line(x1, y1, x2, y2, cls) {
  const el = document.createElementNS(NS, "path");
  el.setAttribute("d", `M${x1} ${y1}L${x2} ${y2}`);
  el.setAttribute("class", cls);
  svg.append(el);
}

function label(value, x, y, vertical, parent) {
  const el = document.createElementNS(NS, "text");
  el.setAttribute("x", x);
  el.setAttribute("y", y);
  if (vertical) {
    el.setAttribute("transform", `rotate(-90 ${x} ${y})`);
    el.setAttribute("text-anchor", "end");
  }
  el.textContent = value;
  parent.append(el);
}

function draw() {
  svg.replaceChildren();
  const w = svg.clientWidth, h = svg.clientHeight;
  const side = document.createElementNS(NS, "svg");
  side.setAttribute("y", RULER_Y);
  side.setAttribute("width", RULER_X);
  side.setAttribute("height", h - RULER_Y);
  for (const kind of ["minor", "major"]) {
    const shift = kind === "minor" ? 0.5 : 0;
    for (let i = -1; i < 60; i++) {
      const x = Math.round(ORIGIN_X + (i + shift) * STEP) + 0.5;
      const y = Math.round(ORIGIN_Y + (i + shift) * STEP) + 0.5;
      if (x > RULER_X && x < w) {
        line(x, RULER_Y, x, h, kind);
        line(x, shift ? 12 : 0, x, RULER_Y, "frame");
        if (!shift) label(20 + i * 10, x + 2, 13, false, svg);
      }
      if (y > RULER_Y && y < h) {
        line(RULER_X, y, w, y, kind);
        line(shift ? 13 : 0, y, RULER_X, y, "frame");
      }
      if (!shift && y < h - 10 && y > 0) label(30 + i * 10, 12, y + 2 - RULER_Y, true, side);
    }
  }
  line(0, 0.5, w, 0.5, "frame");
  line(0, RULER_Y - 0.5, w, RULER_Y - 0.5, "frame");
  line(RULER_X + 0.5, 0, RULER_X + 0.5, h, "frame");
  svg.append(side);
}

const COLORS = `b01020 cc0f2f e84560 f76480 f99bad 2a8294 3ba8c4 42c1de 61daf0 a5f0ff
f45126 ff8038 ff961b ffb717 fec35c 149780 18b49a 1accb2 67d9c8 84ebdc
9a2c5e c84d8a e568a8 f986c5 f1c2da 628a18 76a02a 9bbe25 b2d048 d2e08e
2027b0 3741da 6f41f0 916bf7 ad92f7 fcc900 fbdc2c f1e92b fbf450 fffe85
9b50dd c451e8 d46dfa bf83fb d8a2fc 308044 3ea257 53ad78 66bd8a 93d6ab
e8382b fe4a3d fb6566 fe7a7c fe918a 2442a6 2f59d0 366bf4 648dfc 88aef7
732e05 943801 a84229 cf6042 e27757 1a8ddc 2c9ef6 42b1ff 3dd0fc 68e4ff
7a5038 975e45 b57250 d5855e f59a6c 8a8076 b5ae9c cdc9b8 e5ddcd f4eeda
1a1a1a 303030 464646 5b5b5b 7b7b7b bababa c9c9c9 d9d9d9 e6e6e6 f2f2f2 ffffff`.split(/\s+/);
const swatches = document.getElementById("swatches");
for (const c of COLORS) {
  const s = document.createElement("span");
  s.style.background = "#" + c;
  swatches.append(s);
}
draw();
addEventListener("resize", draw);
```
